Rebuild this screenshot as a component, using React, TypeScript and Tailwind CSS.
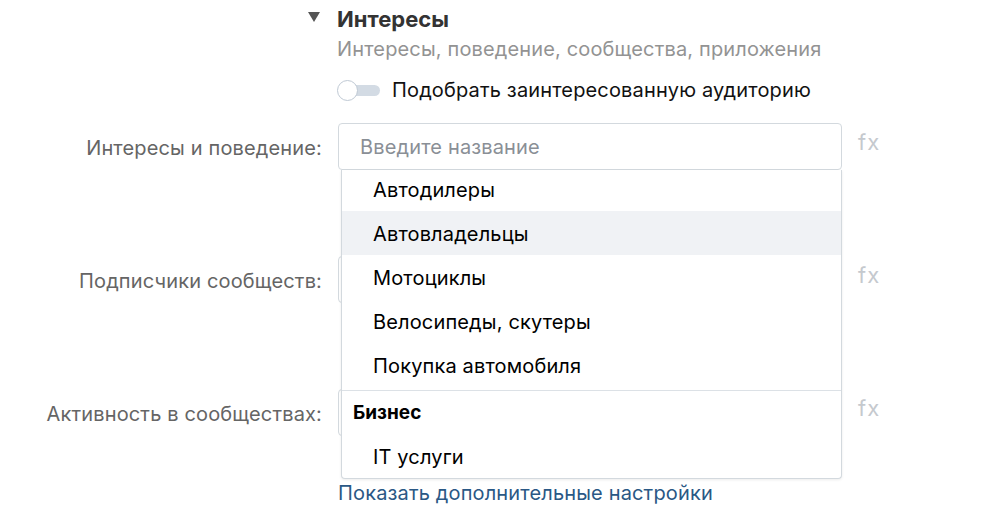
import { useState } from 'react';

type Option = { id: string; name: string; group?: boolean };

const OPTIONS: Option[] = [
  { id: 'dealers', name: 'Автодилеры' },
  { id: 'owners', name: 'Автовладельцы' },
  { id: 'moto', name: 'Мотоциклы' },
  { id: 'bikes', name: 'Велосипеды, скутеры' },
  { id: 'buy', name: 'Покупка автомобиля' },
  { id: 'business', name: 'Бизнес', group: true },
  { id: 'it', name: 'IT услуги' },
];

const FONT = "font-['Inter','Noto_Sans',sans-serif] tracking-[0.15px]";

function FieldRow({ label, placeholder }: { label: string; placeholder?: string }) {
  return (
    <div className="h-[133px]">
      <div className="flex items-center">
        <div className="w-[322px] pt-[2px] text-right text-[20px] leading-6 text-[#656565] whitespace-nowrap">{label}</div>
        <div className="ml-4 w-[504px] h-[47px] border border-[#d3d9de] rounded-[4px] flex items-center pl-[21px] pt-[1px] text-[20px] text-[#8a8f96]">
          {placeholder}
        </div>
        <div className="ml-4 self-start mt-[7px] text-[22px] leading-6 tracking-[1px] text-[#c5c9ce]">fx</div>
      </div>
    </div>
  );
}

export default function App() {
  const [enabled, setEnabled] = useState(false);
  const [hovered, setHovered] = useState('owners');

  return (
    <div className={`relative w-[1000px] h-[523px] bg-white overflow-hidden ${FONT}`}>
      {/* Section header */}
      <div className="pl-[337px] pt-[7px]">
        <div className="relative text-[22px] leading-6 font-bold tracking-normal text-[#333]">
          <svg className="absolute left-[-29px] top-[5px]" width="12" height="10" viewBox="0 0 12 10">
            <path d="M0 0 H12 L6 10 Z" fill="#555" />
          </svg>
          Интересы
        </div>
        <div className="mt-[6px] text-[20px] leading-6 text-[#939393]">Интересы, поведение, сообщества, приложения</div>
        <div className="mt-[17px] flex items-center">
          <button
            onClick={() => setEnabled(!enabled)}
            className="relative w-[43px] h-[24px] flex items-center"
          >
            <span className="absolute left-[4px] right-0 h-[11px] rounded-full bg-[#d3dbe4]" />
            <span className="relative w-[21px] h-[21px] rounded-full bg-white border border-[#bfc9d4]" />
          </button>
          <span className="ml-[12px] text-[20px] leading-6 text-[#111]">Подобрать заинтересованную аудиторию</span>
        </div>
      </div>

      {/* Targeting fields */}
      <div className="mt-[21px]">
        <FieldRow label="Интересы и поведение:" placeholder="Введите название" />
        <FieldRow label="Подписчики сообществ:" />
        <FieldRow label="Активность в сообществах:" />
      </div>

      <div className="absolute left-[338px] top-[481px] text-[20px] leading-6 text-[#2a5885]">
        Показать дополнительные настройки
      </div>

      {/* Suggestions dropdown */}
      <div className="absolute left-[341px] top-[170px] w-[501px] h-[309px] overflow-hidden bg-white border-x border-b border-[#d3d9de] rounded-b-[4px] shadow-[0_1px_3px_rgba(0,0,0,0.08)]">
        <div className="-mt-[3px]">
          {OPTIONS.map((opt) =>
            opt.group ? (
              <div key={opt.id} className="h-[44px] mt-[3px] pt-[2px] border-t border-[#dce1e6] flex items-center pl-[11px] text-[19px] font-bold tracking-normal text-[#000]">
                {opt.name}
              </div>
            ) : (
              <div
                key={opt.id}
                onMouseEnter={() => setHovered(opt.id)}
                className={`h-[44px] pt-[2px] flex items-center pl-[31px] text-[20px] text-[#000] ${hovered === opt.id ? 'bg-[#f0f2f5]' : ''}`}
              >
                {opt.name}
              </div>
            )
          )}
        </div>
      </div>
    </div>
  );
}
